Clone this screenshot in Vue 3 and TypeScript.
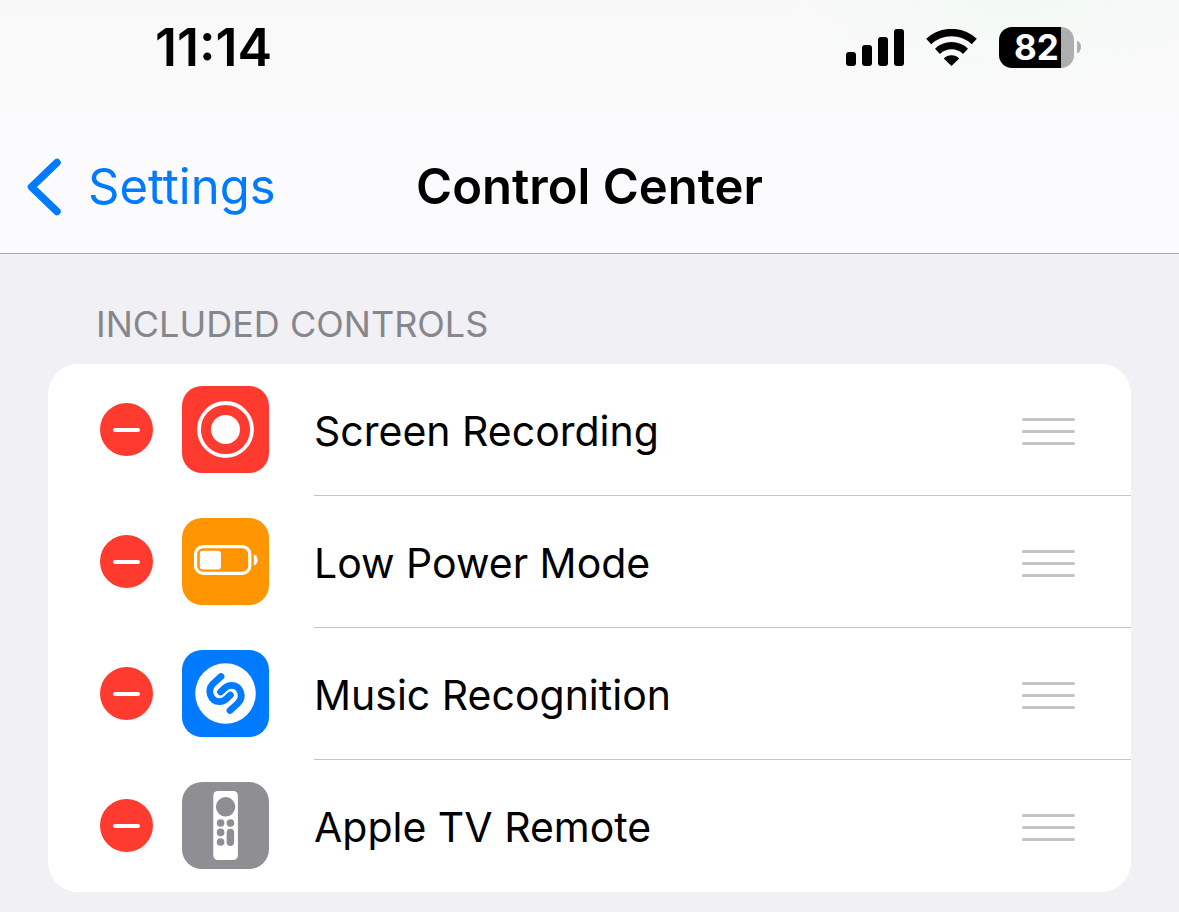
<script setup lang="ts">
import { ref } from 'vue'

type IconName = 'record' | 'power' | 'music' | 'remote'

interface Control {
  name: string
  icon: IconName
}

const controls = ref<Control[]>([
  { name: 'Screen Recording', icon: 'record' },
  { name: 'Low Power Mode', icon: 'power' },
  { name: 'Music Recognition', icon: 'music' },
  { name: 'Apple TV Remote', icon: 'remote' },
])

function remove(control: Control): void {
  controls.value = controls.value.filter((c) => c !== control)
}
</script>

<template>
  <div class="screen">
    <header class="top">
      <div class="status">
        <time class="clock">11:14</time>
        <div class="indicators">
          <svg class="signal" width="58" height="37" viewBox="0 0 58 37" role="img" aria-label="Cellular signal">
            <rect x="0" y="23" width="10" height="14" rx="3" />
            <rect x="16" y="16" width="10" height="21" rx="3" />
            <rect x="32" y="8" width="10" height="29" rx="3" />
            <rect x="48" y="0" width="10" height="37" rx="3" />
          </svg>
          <svg class="wifi" width="51" height="37" viewBox="0 0 51 37" role="img" aria-label="Wi-Fi">
            <path d="M2.7 12.5A33.5 33.5 0 0 1 48.3 12.5" fill="none" stroke="#000" stroke-width="7.4" />
            <path d="M11.5 22.3A20.3 20.3 0 0 1 39.5 22.3" fill="none" stroke="#000" stroke-width="7.2" />
            <path d="M25.5 37L17.8 29.4A11 11 0 0 1 33.2 29.4Z" />
          </svg>
          <div class="battery">
            <span class="battery-body">82</span>
            <span class="battery-tip"></span>
          </div>
        </div>
      </div>
      <nav class="nav">
        <a class="back" href="#settings">
          <svg width="35" height="58" viewBox="0 0 35 58" aria-hidden="true">
            <path d="M30 4.5L4.5 29L30 53.5" fill="none" stroke="#007aff" stroke-width="7.5" stroke-linecap="round" stroke-linejoin="round" />
          </svg>
          <span>Settings</span>
        </a>
        <h1 class="title">Control Center</h1>
      </nav>
    </header>

    <main class="content">
      <h2 class="section-title">INCLUDED CONTROLS</h2>
      <ul class="card">
        <li v-for="control in controls" :key="control.name" class="row">
          <button class="remove" type="button" :aria-label="`Remove ${control.name}`" @click="remove(control)">
            <span class="minus"></span>
          </button>
          <span class="tile" :class="control.icon">
            <svg v-if="control.icon === 'record'" viewBox="0 0 87 87" aria-hidden="true">
              <circle cx="43.5" cy="43.5" r="26.5" fill="none" stroke="#fff" stroke-width="3.8" />
              <circle cx="43.5" cy="43.5" r="14.5" fill="#fff" />
            </svg>
            <svg v-else-if="control.icon === 'power'" viewBox="0 0 87 87" aria-hidden="true">
              <rect x="13.6" y="28.6" width="54.2" height="26.8" rx="7.5" fill="none" stroke="#fff" stroke-width="3.2" />
              <rect x="17.8" y="32.8" width="21.2" height="18.6" rx="3" fill="#fff" />
              <path d="M71.8 36.5C77 38 77 46 71.8 47.5Z" fill="#fff" />
            </svg>
            <svg v-else-if="control.icon === 'music'" viewBox="0 0 87 87" aria-hidden="true">
              <circle cx="43.5" cy="43.5" r="30.3" fill="#fff" />
              <g fill="none" stroke="#007aff" stroke-width="6.8" stroke-linecap="round">
                <path d="M39 26.5L31.2 33.6C24.4 40.3 28.7 51.6 37.5 51.6C40.7 51.6 42.7 50.4 44.7 48.5L48.4 45" />
                <path d="M48 60.5L55.8 53.4C62.6 46.7 58.3 35.4 49.5 35.4C46.3 35.4 44.3 36.6 42.3 38.5L38.6 42" />
              </g>
            </svg>
            <svg v-else viewBox="0 0 87 87" aria-hidden="true">
              <rect x="31.3" y="9" width="24.6" height="69" rx="4.5" fill="#fff" />
              <g fill="#8e8e93">
                <circle cx="43.6" cy="24.8" r="9.7" />
                <circle cx="38.6" cy="41" r="3.8" />
                <circle cx="48.4" cy="41" r="3.8" />
                <circle cx="38.6" cy="50.4" r="3.8" />
                <circle cx="38.6" cy="60" r="3.8" />
                <rect x="44.7" y="46.7" width="7.4" height="17.2" rx="3.7" />
              </g>
            </svg>
          </span>
          <div class="details">
            <span class="label">{{ control.name }}</span>
            <button class="handle" type="button" :aria-label="`Reorder ${control.name}`">
              <span></span><span></span><span></span>
            </button>
          </div>
        </li>
      </ul>
    </main>
  </div>
</template>

<style>
body {
  margin: 0;
  background: #f0f0f5;
}
</style>

<style scoped>
.screen {
  min-height: 100vh;
  box-sizing: border-box;
  background: #f0f0f5;
  color: #000;
  font-family: Inter, 'Liberation Sans', sans-serif;
}

.top {
  border-bottom: 1px solid #a9a9ac;
  background:
    radial-gradient(ellipse 240px 80px at 86% 0, #f2faf5, transparent),
    linear-gradient(#f8f8f8, #fbfbfd 60%, #fbfbfd);
}

.status {
  display: flex;
  align-items: center;
  justify-content: space-between;
  height: 96px;
  padding: 0 98px 0 155px;
}

.clock {
  font-size: 52px;
  line-height: 60px;
  font-weight: 600;
}

.indicators {
  display: flex;
  align-items: center;
  gap: 22px;
  padding-bottom: 2px;
}

.battery {
  display: flex;
  align-items: center;
  gap: 3px;
}

.battery-body {
  width: 75px;
  height: 41px;
  border-radius: 13px;
  background: linear-gradient(to right, #000 62px, #adafae 62px);
  color: #fff;
  font-size: 35px;
  line-height: 41px;
  font-weight: 700;
  text-align: center;
}

.battery-tip {
  width: 4px;
  height: 12px;
  border-radius: 0 4px 4px 0 / 0 6px 6px 0;
  background: #adafae;
}

.nav {
  display: grid;
  grid-template-columns: 1fr auto 1fr;
  align-items: center;
  padding: 61px 27px 36px;
}

.back {
  display: flex;
  align-items: center;
  gap: 26px;
  color: #007aff;
  font-size: 49px;
  line-height: 60px;
  text-decoration: none;
}

.title {
  margin: 0;
  font-size: 49px;
  line-height: 60px;
  font-weight: 600;
}

.content {
  padding: 50px 48px 20px;
}

.section-title {
  margin: 0;
  padding: 0 48px 20px;
  color: #86868b;
  font-size: 36px;
  line-height: 40px;
  font-weight: 400;
}

.card {
  margin: 0;
  padding: 0;
  overflow: hidden;
  border-radius: 30px;
  background: #fff;
  list-style: none;
}

.row {
  display: flex;
  align-items: center;
  height: 132px;
  padding-left: 52px;
}

.remove {
  display: flex;
  align-items: center;
  justify-content: center;
  flex: none;
  width: 53px;
  height: 53px;
  margin: 0 0 1px;
  padding: 0;
  border: 0;
  border-radius: 50%;
  background: #ff3b30;
  cursor: pointer;
}

.minus {
  width: 27px;
  height: 4px;
  border-radius: 2px;
  background: #fff;
}

.tile {
  flex: none;
  width: 87px;
  height: 87px;
  margin: 0 45px 1px 29px;
  border-radius: 20px;
}

.tile svg {
  display: block;
}

.record {
  background: #ff3b30;
}

.power {
  background: #ff9500;
}

.music {
  background: #007aff;
}

.remote {
  background: #8e8e93;
}

.details {
  display: flex;
  flex: 1;
  align-items: center;
  justify-content: space-between;
  align-self: stretch;
  padding-top: 4px;
  padding-right: 56px;
  border-bottom: 1px solid #c6c6c8;
}

.row:last-child .details {
  border-bottom-color: transparent;
}

.label {
  padding-bottom: 2px;
  font-size: 41px;
  line-height: 50px;
}

.handle {
  display: flex;
  flex-direction: column;
  gap: 9px;
  width: 53px;
  padding: 0;
  border: 0;
  background: none;
  cursor: grab;
}

.handle span {
  height: 3px;
  border-radius: 2px;
  background: #c4c4c6;
}
</style>
